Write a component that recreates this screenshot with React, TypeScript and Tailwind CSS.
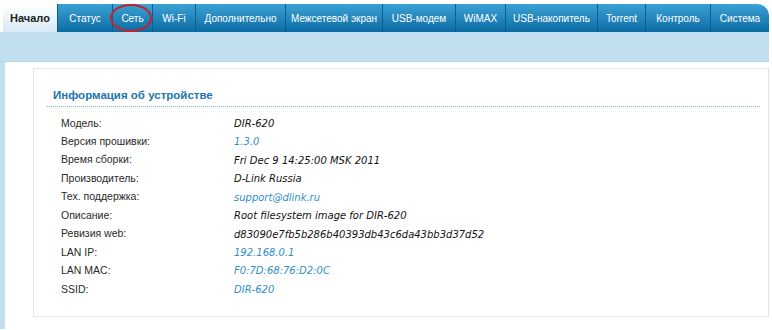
import React from "react";

const tabs = [
  { label: "Статус", w: 55 },
  { label: "Сеть", w: 40 },
  { label: "Wi-Fi", w: 43 },
  { label: "Дополнительно", w: 90 },
  { label: "Межсетевой экран", w: 97 },
  { label: "USB-модем", w: 73 },
  { label: "WiMAX", w: 50 },
  { label: "USB-накопитель", w: 92 },
  { label: "Torrent", w: 48 },
  { label: "Контроль", w: 65 },
  { label: "Система", w: 59 },
];

const rows: { k: string; v: string; link?: boolean }[] = [
  { k: "Модель:", v: "DIR-620" },
  { k: "Версия прошивки:", v: "1.3.0", link: true },
  { k: "Время сборки:", v: "Fri Dec 9 14:25:00 MSK 2011" },
  { k: "Производитель:", v: "D-Link Russia" },
  { k: "Тех. поддержка:", v: "support@dlink.ru", link: true },
  { k: "Описание:", v: "Root filesystem image for DIR-620" },
  { k: "Ревизия web:", v: "d83090e7fb5b286b40393db43c6da43bb3d37d52" },
  { k: "LAN IP:", v: "192.168.0.1", link: true },
  { k: "LAN MAC:", v: "F0:7D:68:76:D2:0C", link: true },
  { k: "SSID:", v: "DIR-620", link: true },
];

const sans = { fontFamily: '"Liberation Sans", Arial, sans-serif' };
const verd = { fontFamily: '"DejaVu Sans", Verdana, sans-serif' };

export default function App() {
  return (
    <div className="relative w-[772px] h-[330px] overflow-hidden bg-white" style={sans}>
      <div className="w-[769px]">
        {/* tab bar */}
        <div className="flex pt-[4px] pl-[3px] h-[32px]">
          <div className="w-[54px] h-[28px] rounded-tl-[10px] bg-gradient-to-b from-white to-[#d6eaf5] flex items-center justify-center text-[11px] font-bold text-[#222]">
            Начало
          </div>
          {tabs.map((t, i) => (
            <div
              key={t.label}
              style={{ width: t.w }}
              className={
                "h-[28px] flex items-center justify-center text-[10px] text-white bg-gradient-to-b from-[#3aa2d4] to-[#0a6ca4] border-l border-[#0a5f90] " +
                (i === tabs.length - 1 ? "rounded-tr-[12px]" : "")
              }
            >
              <span className="whitespace-nowrap">{t.label}</span>
            </div>
          ))}
        </div>
        {/* light blue band */}
        <div className="h-[30px] bg-[#c1dfee] border-b border-[#b5d5e6]" />
        {/* content */}
        <div className="border-l-[5px] border-[#c1dfee] pl-[28px] pt-[6px] pb-[12px] h-[267px]">
          <div className="border border-[#e3e3e3] h-[249px] pl-[13px] pr-[8px] pt-[18px]">
            <div className="text-[11.5px] font-bold text-[#1d75ae] pl-[6px] pb-[2px] border-b border-dotted border-[#7fb6d6]">
              Информация об устройстве
            </div>
            <div className="pt-[7px] pl-[14px]">
              {rows.map((r) => (
                <div key={r.k} className="flex h-[18.45px] items-center">
                  <div className="w-[173px] text-[10.5px] text-[#2a2a2a]">{r.k}</div>
                  <div
                    style={verd}
                    className={
                      "italic text-[10px] " + (r.link ? "text-[#2f8fc9]" : "text-[#111]")
                    }
                  >
                    {r.v}
                  </div>
                </div>
              ))}
            </div>
          </div>
        </div>
      </div>
      {/* red ellipse annotation */}
      <div className="absolute left-[110px] top-[4px] w-[42px] h-[28px] rounded-[50%] border-2 border-[#c8202a]" />
    </div>
  );
}
